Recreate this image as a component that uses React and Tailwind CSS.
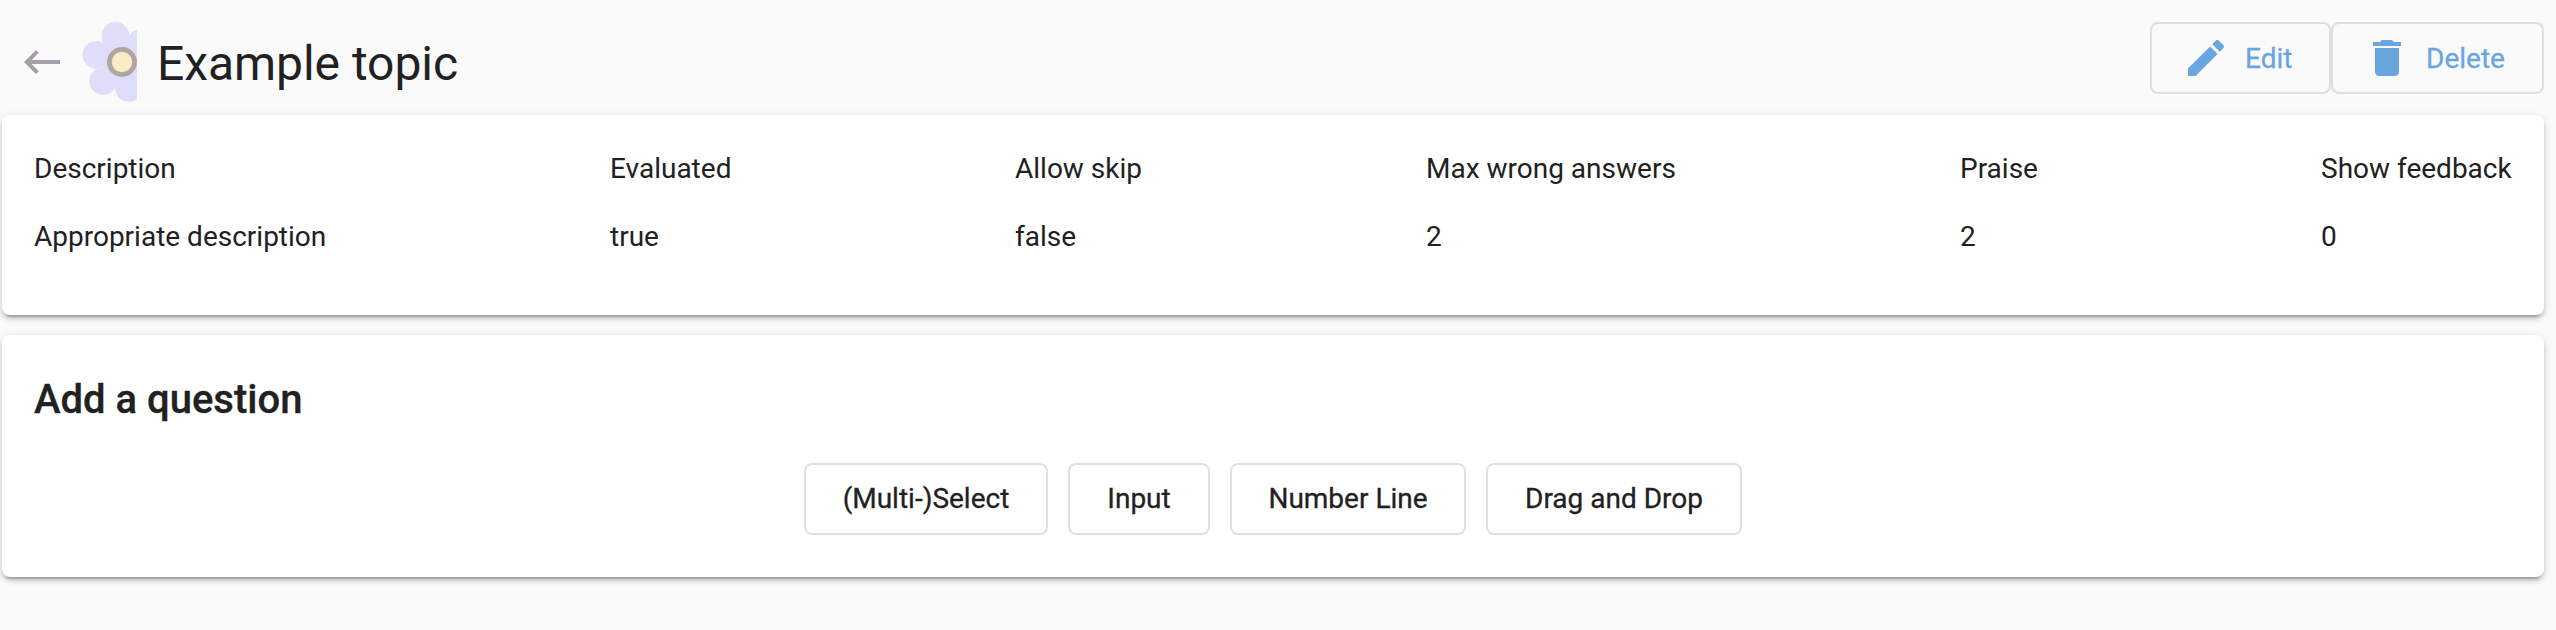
const fields = [
  ['Description', 'Appropriate description'],
  ['Evaluated', 'true'],
  ['Allow skip', 'false'],
  ['Max wrong answers', '2'],
  ['Praise', '2'],
  ['Show feedback', '0'],
];

const questionTypes = [
  ['(Multi-)Select', 'w-[244px]'],
  ['Input', 'w-[142px]'],
  ['Number Line', 'w-[236px]'],
  ['Drag and Drop', 'w-[256px]'],
];

function Icon({ d, className = '' }) {
  return (
    <svg viewBox="0 0 24 24" fill="currentColor" className={`size-12 shrink-0 ${className}`}>
      <path d={d} />
    </svg>
  );
}

function Flower() {
  return (
    <svg width="56" height="82" viewBox="81 21 56 82" className="ml-[15px] shrink-0">
      <g fill="#dfdef9">
        <circle cx="115.4" cy="35.9" r="13.8" />
        <circle cx="96.4" cy="54.8" r="13.8" />
        <circle cx="103" cy="81.2" r="13.8" />
        <circle cx="129" cy="88" r="13.8" />
        <circle cx="148" cy="69" r="13.8" />
        <circle cx="141" cy="43" r="13.8" />
        <circle cx="122" cy="62" r="20" />
      </g>
      <circle cx="122" cy="62" r="12.6" fill="#faedc5" stroke="#b0a5a4" strokeWidth="4.8" />
    </svg>
  );
}

const cardClass =
  'rounded-[8px] bg-white shadow-[0_6px_2px_-4px_rgba(0,0,0,0.2),0_4px_4px_0_rgba(0,0,0,0.14),0_2px_10px_0_rgba(0,0,0,0.12)]';

export default function App() {
  return (
    <div className="h-[630px] w-[2556px] overflow-hidden bg-[#fafafa] pr-3 pl-0.5 font-['Roboto',sans-serif] text-[28px] leading-8 text-[#212121]">
      <header className="flex h-[115px] items-start justify-between">
        <div className="flex h-[124px] items-center pl-4">
          <Icon
            className="text-[#a99cac]"
            d="M21 11H6.83l3.58-3.59L9 6l-6 6 6 6 1.41-1.41L6.83 13H21z"
          />
          <Flower />
          <h1 className="ml-5 pt-1 text-[48px] leading-[64px] tracking-[-0.05px] whitespace-nowrap">Example topic</h1>
        </div>
        <div className="mt-[22px] flex text-[#69a5de]">
          <button className="flex h-[72px] w-[181px] items-center rounded-[8px] border-2 border-[#dedede] pl-[30px]">
            <Icon d="M3 17.25V21h3.75L17.81 9.94l-3.75-3.75L3 17.25zM20.71 7.04a.996.996 0 0 0 0-1.41l-2.34-2.34a.996.996 0 0 0-1.41 0l-1.83 1.83 3.75 3.75 1.83-1.83z" />
            <span className="ml-[15px] pt-0.5 [-webkit-text-stroke:0.3px_currentColor]">Edit</span>
          </button>
          <button className="flex h-[72px] w-[213px] items-center rounded-[8px] border-2 border-[#dedede] pl-[30px]">
            <Icon d="M6 19c0 1.1.9 2 2 2h8c1.1 0 2-.9 2-2V7H6v12zM19 4h-3.5l-1-1h-5l-1 1H5v2h14V4z" />
            <span className="ml-[15px] pt-0.5 [-webkit-text-stroke:0.3px_currentColor]">Delete</span>
          </button>
        </div>
      </header>

      <section className={`h-[200px] px-8 pt-[38px] ${cardClass}`}>
        <dl className="grid grid-cols-[576px_405px_411px_534px_361px_1fr] whitespace-nowrap">
          {fields.map(([label, value]) => (
            <div key={label}>
              <dt>{label}</dt>
              <dd className="mt-9">{value}</dd>
            </div>
          ))}
        </dl>
      </section>

      <section className={`mt-5 h-[242px] px-8 pt-[41px] ${cardClass}`}>
        <h2 className="text-[40px] leading-[48px] font-medium [-webkit-text-stroke:0.3px_currentColor]">Add a question</h2>
        <div className="mt-[39px] flex justify-center gap-5">
          {questionTypes.map(([label, width]) => (
            <button
              key={label}
              className={`flex h-[72px] items-center justify-center rounded-[8px] border-2 border-[#e0e0e0] whitespace-nowrap [-webkit-text-stroke:0.3px_currentColor] ${width}`}
            >
              {label}
            </button>
          ))}
        </div>
      </section>
    </div>
  );
}
